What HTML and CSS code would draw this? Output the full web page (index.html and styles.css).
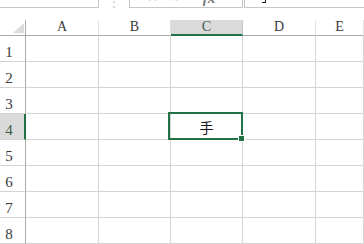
FILE: index.html
```html
<!DOCTYPE html>
<html>
<head>
<meta charset="utf-8">
<link rel="stylesheet" href="styles.css">
</head>
<body>
<div class="topbar">
  <div class="namebox"><span class="nametext">C4</span></div>
  <div class="grip">⋮</div>
  <div class="fxbtns">
    <span class="btn x">✕</span>
    <span class="btn ok">✓</span>
    <span class="btn fx">fx</span>
  </div>
  <div class="formula"><span class="caret"></span></div>
</div>
<div class="sheet">
  <div class="corner"><div class="tri"></div></div>
  <div class="colh">A</div>
  <div class="colh">B</div>
  <div class="colh sel">C</div>
  <div class="colh">D</div>
  <div class="colh">E</div>

  <div class="rowh">1</div><div class="cell"></div><div class="cell"></div><div class="cell"></div><div class="cell"></div><div class="cell"></div>
  <div class="rowh">2</div><div class="cell"></div><div class="cell"></div><div class="cell"></div><div class="cell"></div><div class="cell"></div>
  <div class="rowh">3</div><div class="cell"></div><div class="cell"></div><div class="cell"></div><div class="cell"></div><div class="cell"></div>
  <div class="rowh sel">4</div><div class="cell"></div><div class="cell"></div><div class="cell active">手<div class="selbox"><div class="handle"></div></div></div><div class="cell"></div><div class="cell"></div>
  <div class="rowh">5</div><div class="cell"></div><div class="cell"></div><div class="cell"></div><div class="cell"></div><div class="cell"></div>
  <div class="rowh">6</div><div class="cell"></div><div class="cell"></div><div class="cell"></div><div class="cell"></div><div class="cell"></div>
  <div class="rowh">7</div><div class="cell"></div><div class="cell"></div><div class="cell"></div><div class="cell"></div><div class="cell"></div>
  <div class="rowh">8</div><div class="cell"></div><div class="cell"></div><div class="cell"></div><div class="cell"></div><div class="cell"></div>
</div>
</body>
</html>
```

FILE: styles.css
```css
html, body {
  margin: 0;
  padding: 0;
  background: #ffffff;
  overflow: hidden;
}
body {
  width: 364px;
  height: 244px;
  font-family: "Liberation Serif", "DejaVu Serif", serif;
  color: #222;
}
.topbar {
  display: flex;
  height: 8px;
  overflow: hidden;
}
.namebox {
  width: 98px;
  height: 7px;
  border-right: 1px solid #c6c6c6;
  border-bottom: 1px solid #c6c6c6;
  display: flex;
  align-items: flex-end;
  overflow: hidden;
}
.nametext {
  font-family: "Liberation Sans", Arial, sans-serif;
  font-size: 13px;
  line-height: 14px;
  margin-bottom: 4px;
  margin-left: 2px;
  color: #333;
}
.grip {
  width: 30px;
  height: 8px;
  display: flex;
  justify-content: center;
  align-items: flex-end;
  font-size: 12px;
  line-height: 12px;
  color: #c8c8c8;
  overflow: hidden;
}
.fxbtns {
  width: 112px;
  height: 7px;
  border-left: 1px solid #c6c6c6;
  border-right: 1px solid #c6c6c6;
  border-bottom: 1px solid #c6c6c6;
  display: flex;
  align-items: flex-end;
  overflow: hidden;
}
.btn {
  line-height: 14px;
  margin-bottom: 2px;
  font-family: "DejaVu Sans", sans-serif;
  font-size: 13px;
  color: #c4c4c4;
}
.btn.x { margin-left: 17px; }
.btn.ok { margin-left: 15px; }
.btn.fx {
  margin-left: 19px;
  font-family: "Liberation Serif", serif;
  font-style: italic;
  font-weight: bold;
  font-size: 15px;
  color: #7a7a7a;
}
.formula {
  flex: 1;
  height: 7px;
  margin-left: 1px;
  border-left: 1px solid #c6c6c6;
  border-bottom: 1px solid #c6c6c6;
  overflow: hidden;
}
.caret {
  display: block;
  width: 3px;
  height: 3px;
  margin-left: 17px;
  border-right: 1px solid #222;
  border-bottom: 1px solid #222;
  margin-top: -1px;
}
.sheet {
  margin-top: 12px;
  display: grid;
  grid-template-columns: 26px 73px 72px 72px 73px 1fr;
  grid-template-rows: 16px repeat(8, 26px);
}
.corner {
  border-right: 1px solid #ababab;
  border-bottom: 1px solid #ababab;
  display: flex;
  justify-content: flex-end;
  align-items: flex-end;
}
.tri {
  width: 11px;
  height: 10px;
  margin-right: 1px;
  margin-bottom: 2px;
  background: #dcdcdc;
  clip-path: polygon(100% 0, 100% 100%, 0 100%);
}
.colh {
  border-right: 1px solid #e2e2e2;
  border-bottom: 1px solid #ababab;
  display: flex;
  justify-content: center;
  align-items: flex-end;
  font-size: 14px;
  line-height: 14px;
  padding-bottom: 1px;
  box-sizing: border-box;
  color: #3a3a3a;
}
.colh.sel {
  background: #dadada;
  border-bottom: 2px solid #217346;
  border-right-color: #c8c8c8;
  padding-bottom: 0;
  color: #3d5c4c;
}
.rowh {
  border-right: 1px solid #ababab;
  border-bottom: 1px solid #d4d4d4;
  display: flex;
  justify-content: center;
  align-items: flex-end;
  padding-right: 7px;
  padding-bottom: 2px;
  box-sizing: border-box;
  font-size: 15px;
  line-height: 14px;
  color: #3a3a3a;
}
.rowh.sel {
  background: #dadada;
  border-right: 2px solid #217346;
  padding-right: 6px;
  color: #3d5c4c;
}
.cell {
  border-right: 1px solid #d4d4d4;
  border-bottom: 1px solid #d4d4d4;
}
.cell.active {
  position: relative;
  display: flex;
  justify-content: center;
  align-items: center;
  font-family: "Noto Sans CJK SC", sans-serif;
  font-size: 14px;
  color: #111;
}
.selbox {
  position: absolute;
  left: -3px;
  top: -2px;
  right: -1px;
  bottom: -1px;
  border: 2px solid #217346;
}
.handle {
  position: absolute;
  right: -4px;
  bottom: -4px;
  width: 5px;
  height: 5px;
  background: #217346;
  border: 1px solid #ffffff;
}
```
